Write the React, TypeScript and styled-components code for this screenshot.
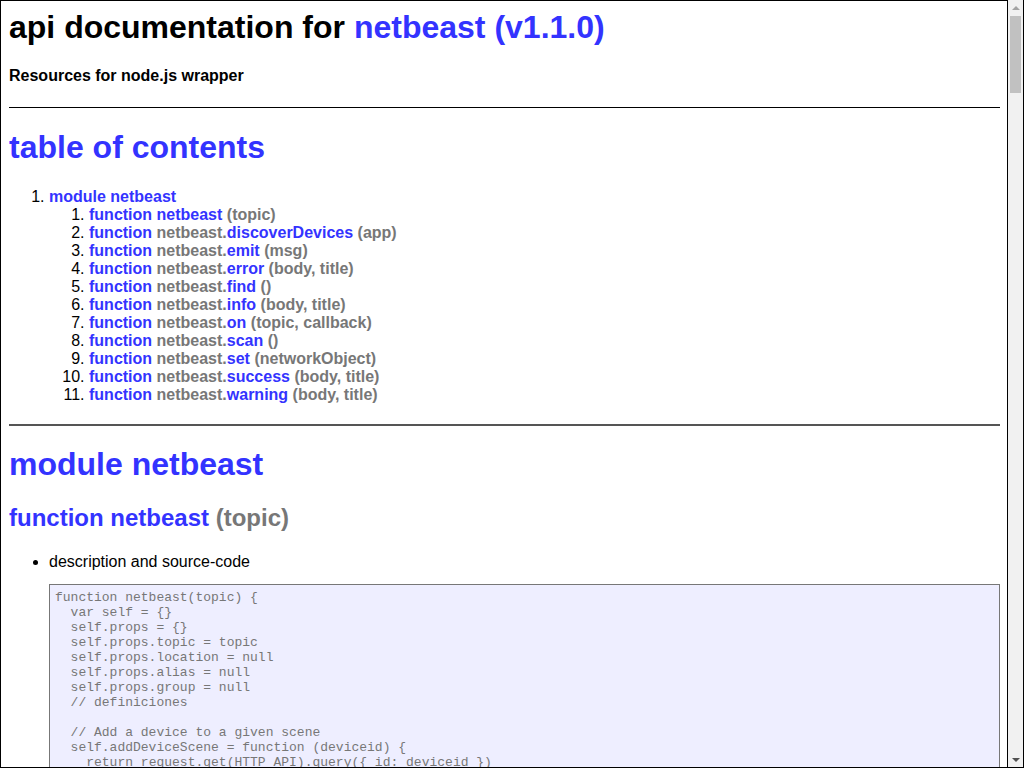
import React from 'react'
import styled, { createGlobalStyle } from 'styled-components'

const GlobalStyle = createGlobalStyle`
  html, body {
    margin: 0;
    height: 100%;
    overflow: hidden;
  }
  body {
    background: #fff;
    color: #000;
    font-family: "Liberation Sans", Arial, Helvetica, sans-serif;
  }
`

type Element = {
  owner: string
  name: string
  signature: string
  source: string
  example: string
}

const netbeastSource = `function netbeast(topic) {
  var self = {}
  self.props = {}
  self.props.topic = topic
  self.props.location = null
  self.props.alias = null
  self.props.group = null
  // definiciones

  // Add a device to a given scene
  self.addDeviceScene = function (deviceid) {
    return request.get(HTTP_API).query({ id: deviceid })
    .then(function (res) {
      var device = res.body[0]
      return request.get(APP_PROXY + device.app + '/' + device.hook)
      .then(function (res) {
        var query = {
          id: device.id,
          sceneid: self.props.topic,
          location: device.location,
          state: JSON.stringify(res.body)
        }
        return request.post(SCENES_API).send(query)
      })
    })
  }

  // Create a new scene with the given devices
  self.create = function (json) {
    var promises = []
    json.forEach(function (device) {
      promises.push(self.addDeviceScene(device))
    })
    return Promise.all(promises)
  }

  // Apply the values saved on a scene
  self.apply = function () {
    return request.get(SCENES_API).query({ sceneid: self.props.topic })
    .then(function (res) {
      var promises = []
      res.body.forEach(function (device) {
        promises.push(request.post(HTTP_API).query({ id: device.id })
        .send(JSON.parse(device.state)))
      })
      return Promise.all(promises)
    })
  }

  // Delete the whole scene
  self.deleteScene = function () {
    return request.del(SCENES_API).query({ sceneid: self.props.topic })
  }

  // Delete a device from the scene
  self.deleteDevice = function (deviceid) {
    return request.del(SCENES_API)
    .query({ sceneid: self.props.topic, id: deviceid })
  }

  // Returns the devices of the scene
  self.getScene = function () {
    return request.get(SCENES_API).query({ sceneid: self.props.topic })
    .then(function (res) {
      return Promise.resolve(res.body)
    })
  }

  self.at = function (location) {
    self.props.location = location
    return self
  }

  self.alias = function (alias) {
    self.props.alias = alias
    return self
  }

  self.group = function (group) {
    self.props.group = group
    return self
  }

  self.get = function (args) {
    var query = {}
    query.topic = self.props.topic
    if (self.props.location) query.location = self.props.location
    if (self.props.alias) query.alias = self.props.alias
    if (self.props.group) query.groupname = self.props.group

    return request.get(HTTP_API).query(query)
    .then(function (res) {
      var promises = []
      res.body.forEach(function (device) {
        promises.push(request.get(APP_PROXY + device.app + '/' + device.hook)
        .query(args))
      })
      return Promise.all(promises)
    })
  }

  self.set = function (args) {
    var query = {}
    query.topic = self.props.topic
    if (self.props.location) query.location = self.props.location
    if (self.props.alias) query.alias = self.props.alias
    if (self.props.group) query.groupname = self.props.group

    return request.get(HTTP_API).query(query)
    .then(function (res) {
      var promises = []
      res.body.forEach(function (device) {
        promises.push(request.post(APP_PROXY + device.app + '/' + device.hook)
        .send(args))
      })
      return Promise.all(promises)
    })
  }

  self.on = function (callback) {
    client.on('message', function (topic, message) {
      if (topic === 'netbeast/' + self.props.topic) {
        callback(null, JSON.parse(message.toString()))
      }
    })
    client.subscribe('netbeast/' + self.props.topic)
    return self
  }

  return self
}`

const notify = (kind: string) => `function (body, title) {
  netbeast.emit({ emphasis: '${kind}', body: body, title: title })
}`

const elements: Element[] = [
  {
    owner: '',
    name: 'netbeast',
    signature: '(topic)',
    source: netbeastSource,
    example: `n/a`,
  },
  {
    owner: 'netbeast.',
    name: 'discoverDevices',
    signature: '(app)',
    source: `function (app) {
  if (!app) return Promise.reject(new Error('App name required'))
  return request.get(APP_PROXY + app + '/discover')
  .then(function (res) {
    return Promise.resolve(res.body)
  })
}`,
    example: `...
netbeast.discoverDevices('philips-hue')
.then(function (devices) {
  console.log(devices)
})
...`,
  },
  {
    owner: 'netbeast.',
    name: 'emit',
    signature: '(msg)',
    source: `function (msg) {
  client.publish('netbeast/push', JSON.stringify(msg))
}`,
    example: `...
netbeast.emit({ emphasis: 'info', body: 'hello world' })
...`,
  },
  {
    owner: 'netbeast.',
    name: 'error',
    signature: '(body, title)',
    source: notify('error'),
    example: `...
netbeast.error('Something went wrong', 'Oops!')
...`,
  },
  {
    owner: 'netbeast.',
    name: 'find',
    signature: '()',
    source: `function () {
  return new Promise(function (resolve, reject) {
    if (process.env.NETBEAST) return resolve(process.env.NETBEAST)
    scanner.once('ready', function (ip, port) {
      process.env.NETBEAST = ip + ':' + port
      resolve(process.env.NETBEAST)
    })
    scanner.once('error', reject)
    scanner.scan()
  })
}`,
    example: `...
netbeast.find().then(function () {
  netbeast('lights').set({ power: 1 })
})
...`,
  },
  {
    owner: 'netbeast.',
    name: 'info',
    signature: '(body, title)',
    source: notify('info'),
    example: `...
netbeast.info('Lights are on', 'Living room')
...`,
  },
  {
    owner: 'netbeast.',
    name: 'on',
    signature: '(topic, callback)',
    source: `function (topic, callback) {
  client.on('message', function (t, message) {
    if (t === 'netbeast/' + topic) callback(null, JSON.parse(message.toString()))
  })
  client.subscribe('netbeast/' + topic)
}`,
    example: `...
netbeast.on('lights', function (err, data) {
  if (err) return console.error(err)
  console.log(data)
})
...`,
  },
  {
    owner: 'netbeast.',
    name: 'scan',
    signature: '()',
    source: `function () {
  return new Promise(function (resolve, reject) {
    var found = []
    scanner.on('ready', function (ip, port) {
      found.push(ip + ':' + port)
    })
    scanner.once('error', reject)
    setTimeout(function () {
      resolve(found)
    }, 3000)
    scanner.scan()
  })
}`,
    example: `...
netbeast.scan().then(function (servers) {
  console.log(servers)
})
...`,
  },
  {
    owner: 'netbeast.',
    name: 'set',
    signature: '(networkObject)',
    source: `function (networkObject) {
  process.env.NETBEAST = networkObject.address + ':' + networkObject.port
  HTTP_API = 'http://' + process.env.NETBEAST + '/api/resources'
  SCENES_API = 'http://' + process.env.NETBEAST + '/api/scenes'
  APP_PROXY = 'http://' + process.env.NETBEAST + '/i/'
}`,
    example: `...
netbeast.set({ address: '192.168.1.20', port: 8000 })
...`,
  },
  {
    owner: 'netbeast.',
    name: 'success',
    signature: '(body, title)',
    source: notify('success'),
    example: `...
netbeast.success('Scene saved', 'Done')
...`,
  },
  {
    owner: 'netbeast.',
    name: 'warning',
    signature: '(body, title)',
    source: notify('warning'),
    example: `...
netbeast.warning('Battery low', 'Sensor')
...`,
  },
]

function Scrollbar() {
  return (
    <ScrollTrack>
      <ScrollButton>
        <Arrow $dir="up" />
      </ScrollButton>
      <ScrollRail>
        <ScrollThumb />
      </ScrollRail>
      <ScrollButton>
        <Arrow $dir="down" />
      </ScrollButton>
    </ScrollTrack>
  )
}

export default function App() {
  return (
    <>
      <GlobalStyle />
      <Viewport>
        <Page>
          <Title>
            api documentation for <Link href="#">netbeast (v1.1.0)</Link>
          </Title>
          <Subtitle>Resources for node.js wrapper</Subtitle>

          <Section>
            <SectionTitle>
              <Link href="#apidoc.tableOfContents">table of contents</Link>
            </SectionTitle>
            <Toc>
              <ModuleItem>
                <Link href="#apidoc.module.netbeast">module netbeast</Link>
                <ElementList>
                  {elements.map((el) => (
                    <li key={el.name}>
                      <Link href={`#apidoc.element.netbeast.${el.name}`}>
                        function <Signature>{el.owner}</Signature>
                        {el.name} <Signature>{el.signature}</Signature>
                      </Link>
                    </li>
                  ))}
                </ElementList>
              </ModuleItem>
            </Toc>
          </Section>

          <Section $tone="dark">
            <SectionTitle $tight>
              <Link href="#apidoc.module.netbeast">module netbeast</Link>
            </SectionTitle>
            {elements.map((el) => (
              <React.Fragment key={el.name}>
                <ElementTitle>
                  <Link href={`#apidoc.element.netbeast.${el.name}`}>
                    function <Signature>{el.owner}</Signature>
                    {el.name} <Signature>{el.signature}</Signature>
                  </Link>
                </ElementTitle>
                <DetailList>
                  <li>
                    description and source-code
                    <CodePre>{el.source}</CodePre>
                  </li>
                  <li>
                    example usage
                    <CodePre>{el.example}</CodePre>
                  </li>
                </DetailList>
              </React.Fragment>
            ))}
          </Section>

          <Footer>
            [ this document was created with <Link href="#">utility2</Link> ]
          </Footer>
        </Page>
        <Scrollbar />
      </Viewport>
    </>
  )
}

const Viewport = styled.div`
  display: flex;
  height: 100vh;
  box-sizing: border-box;
  border-right: 1px solid #000;
  border-bottom: 1px solid #000;
`

const Page = styled.div`
  flex: 1;
  min-width: 0;
  overflow-y: auto;
  scrollbar-width: none;
  border: 1px solid #000;
  border-bottom: none;
  padding: 8px 7px 8px 8px;
  background: #fff;
  font-family: "Liberation Sans", Arial, Helvetica, sans-serif;

  &::-webkit-scrollbar {
    display: none;
  }
`

const ScrollTrack = styled.div`
  display: flex;
  flex-direction: column;
  width: 15px;
  flex-shrink: 0;
  background: #f1f1f1;
`

const ScrollButton = styled.div`
  display: flex;
  align-items: center;
  justify-content: center;
  height: 16px;
  flex-shrink: 0;
`

const Arrow = styled.span<{ $dir: 'up' | 'down' }>`
  width: 0;
  height: 0;
  border-left: 4px solid transparent;
  border-right: 4px solid transparent;
  ${(p) =>
    p.$dir === 'up'
      ? 'border-bottom: 4px solid #a3a3a3; margin-bottom: 1px;'
      : 'border-top: 4px solid #505050; margin-top: 1px;'}
`

const ScrollRail = styled.div`
  flex: 1;
  padding: 0 2px;
`

const ScrollThumb = styled.div`
  height: 77px;
  background: #c1c1c1;
`

const Link = styled.a`
  color: #33f;
  font-weight: bold;
  text-decoration: none;
`

const Title = styled.h1`
  margin: 0 0 0.67em;
  font-size: 32px;
  font-weight: bold;
`

const Subtitle = styled.h4`
  margin: 1.33em 0;
  font-size: 16px;
  font-weight: bold;
`

const Section = styled.div<{ $tone?: 'dark' }>`
  border-top: ${(p) => (p.$tone === 'dark' ? '2px solid #555' : '1px solid #000')};
  margin-top: 20px;
`

const SectionTitle = styled.h1<{ $tight?: boolean }>`
  margin: ${(p) => (p.$tight ? '20px' : '0.67em')} 0 0.67em;
  font-size: 32px;
  font-weight: bold;
`

const Toc = styled.ol`
  margin: 16px 0;
  padding-left: 40px;
`

const ModuleItem = styled.li`
  margin-top: 10px;
`

const ElementList = styled.ol`
  margin: 0;
  padding-left: 40px;
`

const Signature = styled.span`
  color: #777;
  font-weight: bold;
`

const ElementTitle = styled.h2`
  margin: 0.83em 0 21px;
  font-size: 24px;
  font-weight: bold;
`

const DetailList = styled.ul`
  margin: 16px 0;
  padding-left: 40px;
`

const CodePre = styled.pre`
  margin: 13px 0;
  padding: 5px;
  background: #eef;
  border: 1px solid #777;
  color: #777;
  font-family: "Liberation Mono", "Courier New", monospace;
  font-size: 13px;
  white-space: pre-wrap;
`

const Footer = styled.div`
  margin-top: 20px;
  text-align: center;
`
